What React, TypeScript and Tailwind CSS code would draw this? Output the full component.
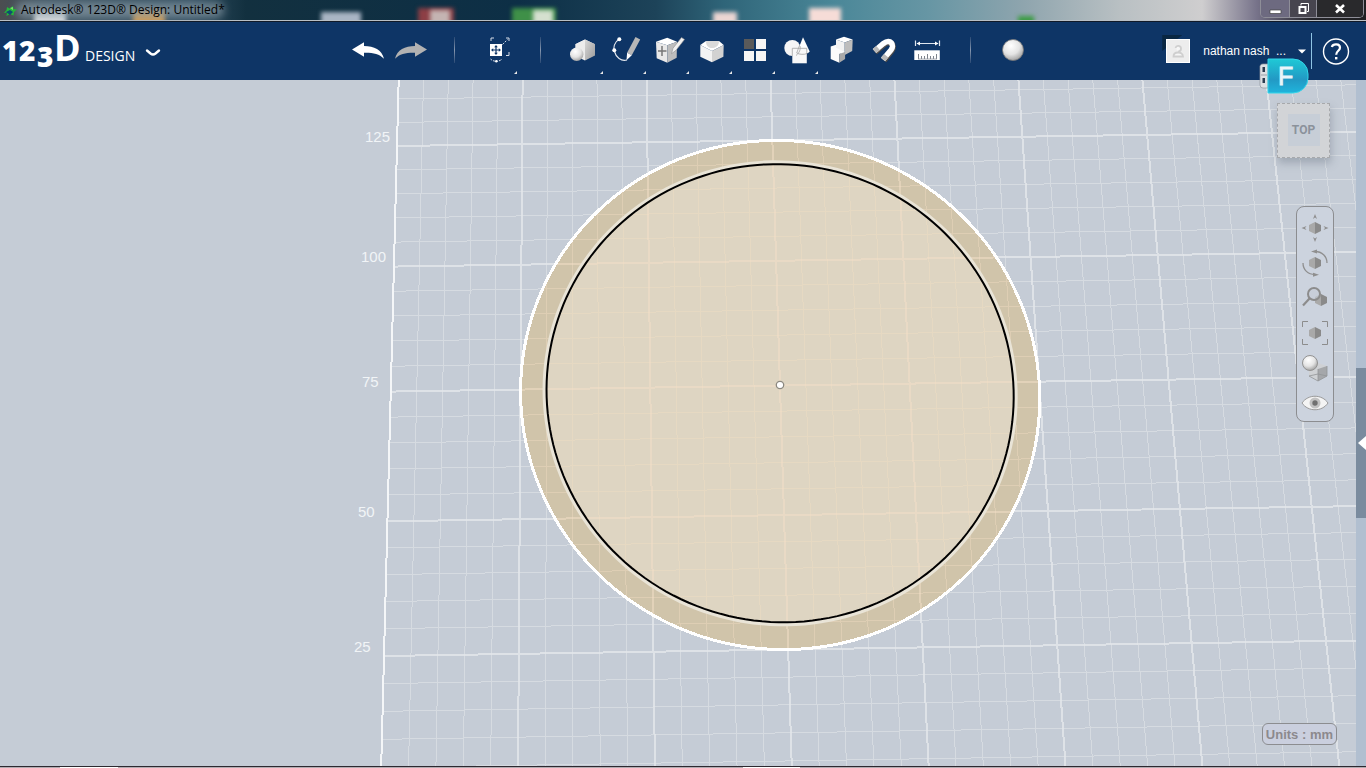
import type { ReactNode } from 'react';

type Point = [number, number];

// Screen positions of the sketch plane, measured in major grid cells (25 mm each)
const COLS = 7;
const ROWS = 4;
const CORNERS: Point[] = [[397, 146], [1272, 133], [1326, 641], [384, 656]];

function makeProjection([p0, p1, p2, p3]: Point[]) {
  const dx1 = p1[0] - p2[0];
  const dx2 = p3[0] - p2[0];
  const dx3 = p0[0] - p1[0] + p2[0] - p3[0];
  const dy1 = p1[1] - p2[1];
  const dy2 = p3[1] - p2[1];
  const dy3 = p0[1] - p1[1] + p2[1] - p3[1];
  const det = dx1 * dy2 - dx2 * dy1;
  const g = (dx3 * dy2 - dx2 * dy3) / det;
  const h = (dx1 * dy3 - dx3 * dy1) / det;
  const a = p1[0] - p0[0] + g * p1[0];
  const b = p3[0] - p0[0] + h * p3[0];
  const d = p1[1] - p0[1] + g * p1[1];
  const e = p3[1] - p0[1] + h * p3[1];

  return (col: number, row: number): Point => {
    const u = col / COLS;
    const v = row / ROWS;
    const w = g * u + h * v + 1;
    return [(a * u + b * v + p0[0]) / w, (d * u + e * v + p0[1]) / w];
  };
}

const project = makeProjection(CORNERS);

function segment(c1: number, r1: number, c2: number, r2: number) {
  const [x1, y1] = project(c1, r1);
  const [x2, y2] = project(c2, r2);
  return `M${x1.toFixed(2)} ${y1.toFixed(2)}L${x2.toFixed(2)} ${y2.toFixed(2)}`;
}

function gridPaths() {
  let minor = '';
  let major = '';
  for (let i = 1; i <= 42; i++) {
    const d = segment(i / 5, -1, i / 5, 5.5);
    if (i % 5 === 0) major += d;
    else minor += d;
  }
  for (let i = -5; i <= 26; i++) {
    const d = segment(0, i / 5, 8.4, i / 5);
    if (i % 5 === 0) major += d;
    else minor += d;
  }
  return { minor, major };
}

function circlePath(radius: number) {
  const pts: string[] = [];
  for (let i = 0; i < 180; i++) {
    const t = (i / 180) * Math.PI * 2;
    const [x, y] = project(3 + radius * Math.cos(t), 2 + radius * Math.sin(t));
    pts.push(`${x.toFixed(2)} ${y.toFixed(2)}`);
  }
  return `M${pts.join('L')}Z`;
}

const GRID = gridPaths();
const OUTER = circlePath(2);
const HALO = circlePath(1.815);
const INNER = circlePath(1.8);

const RULER = [
  { label: '125', x: 365, y: 142 },
  { label: '100', x: 361, y: 262 },
  { label: '75', x: 362, y: 387 },
  { label: '50', x: 358, y: 517 },
  { label: '25', x: 354, y: 652 },
];

function Workplane() {
  return (
    <svg className="absolute inset-0 h-full w-full" viewBox="0 80 1366 686" preserveAspectRatio="xMidYMid slice" aria-label="Sketch workplane">
      <defs>
        <clipPath id="disc">
          <path d={OUTER} />
        </clipPath>
      </defs>
      <g fill="none" shapeRendering="crispEdges">
        <path d={GRID.minor} stroke="#d6dbe1" />
        <path d={GRID.major} stroke="#e4e7eb" strokeWidth="2" strokeOpacity="0.8" />
        <path d={segment(0, -1, 0, 5.5)} stroke="#f4f6f8" strokeWidth="2" />
      </g>
      <path d={OUTER} fill="#d0c4aa" />
      <path d={INNER} fill="#ded5c2" />
      <g clipPath="url(#disc)" fill="none" shapeRendering="crispEdges">
        <path d={GRID.minor} stroke="#f3dfc4" strokeOpacity="0.4" />
        <path d={GRID.major} stroke="#f3e0c8" strokeWidth="2" strokeOpacity="0.5" />
      </g>
      <path d={HALO} fill="none" stroke="#e9e4d7" strokeWidth="4" />
      <path d={INNER} fill="none" stroke="#000" strokeWidth="2" />
      <path d={OUTER} fill="none" stroke="#fff" strokeWidth="3" shapeRendering="crispEdges" />
      <circle cx="780" cy="385" r="3.7" fill="#fff" stroke="#8b8880" strokeWidth="1.3" />
      <g fill="#f1f4f7" fontFamily='"Liberation Sans", Arial, sans-serif' fontSize="15">
        {RULER.map((r) => (
          <text key={r.label} x={r.x} y={r.y}>{r.label}</text>
        ))}
      </g>
    </svg>
  );
}

function ToolSvg({ children }: { children: ReactNode }) {
  return <svg width="33" height="32" viewBox="0 0 33 32" fill="none" aria-hidden="true">{children}</svg>;
}

const UndoIcon = (
  <ToolSvg>
    <path d="M0 15.5 12 8.3V12c10 0 18 4 20 12.7-5-5-11-6.2-20-6v4Z" fill="#fff" />
  </ToolSvg>
);

const RedoIcon = (
  <ToolSvg>
    <path d="M32 15.5 20 8.3V12C10 12 2 16 0 24.7c5-5 11-6.2 20-6v4Z" fill="#b2b2b2" />
  </ToolSvg>
);

const TransformIcon = (
  <ToolSvg>
    <rect x="9" y="10" width="12" height="12" fill="#fff" />
    <path d="M10 7V4h3M25 4h3v3M28 18v3.5h-3" stroke="#d5dce6" />
    <path d="m21.5 10.500 5-5" stroke="#d5dce6" strokeDasharray="2 1.2" />
    <path d="M15 12v8M11 16h8" stroke="#0e3566" strokeWidth="1.2" />
    <path d="m13.200 13.200 1.800-2.200 1.800 2.200ZM13.200 18.800 15 21l1.800-2.200ZM12.200 14.200 10 16l2.200 1.800ZM17.800 14.200 20 16l-2.200 1.800Z" fill="#0e3566" />
    <path d="M9.5 25c2.5 3 9 3 11.5 0" stroke="#d5dce6" strokeDasharray="2 1" />
    <circle cx="15.3" cy="27.3" r="1.2" fill="#fff" />
  </ToolSvg>
);

const PrimitivesIcon = (
  <ToolSvg>
    <path d="m18 5.5 10 4.7-10 5.3-9.7-5.3Z" fill="#fff" />
    <path d="M18 5.5v21L8.3 22V10.2Z" fill="#ececec" />
    <path d="M18 5.5v21l10-5V10.2Z" fill="url(#faceShade)" />
    <circle cx="9.7" cy="20.3" r="6.7" fill="url(#ball)" />
  </ToolSvg>
);

const SketchIcon = (
  <ToolSvg>
    <path d="M9.3 5.3C4 8 3 14 4.5 17.5 6 23.5 11 27.5 17 26" stroke="#e6eaf0" strokeWidth="1.1" />
    <circle cx="9.3" cy="5.3" r="2" fill="#fff" />
    <circle cx="4.3" cy="16.3" r="2" fill="#fff" />
    <path d="m25.5 3 4.7 2.5-8.4 15.7-4.7-2.4Z" fill="#b7b7b7" />
    <path d="m17.1 18.8 4.7 2.4-5.3 5Z" fill="#fff" />
  </ToolSvg>
);

const ConstructIcon = (
  <ToolSvg>
    <path d="m14.3 3.7 9.7 4-9.7 3.5L3 7.7Z" fill="#fff" />
    <path d="M3 7.7 14.3 11.2v17.5L3.700 24.3Z" fill="#e9e9e9" />
    <path d="M24 7.7 14.3 11.2v17.5l9.4-5Z" fill="#bdbdbd" />
    <path d="M9 12v10M5 17h8.500" stroke="#777" strokeWidth="1.5" />
    <path d="m28.5 3.5 3 2-8.500 10.8-4.5 3.4 1.5-5.5Z" fill="#f1f1f1" stroke="#8d8d8d" strokeWidth="0.6" />
  </ToolSvg>
);

const ModifyIcon = (
  <ToolSvg>
    <path d="M4.3 11 10 7h13l4.700 4L16 17Z" fill="#fff" />
    <path d="M4.3 11 16 17v11.300L4.300 22.700Z" fill="#f3f3f3" />
    <path d="M27.700 11 16 17v11.300l11.400-5.600Z" fill="#d2d2d2" />
    <path d="M10 7c0 5.500 3 7 6 7s7-1.500 7-7Z" fill="#dadada" />
  </ToolSvg>
);

const PatternIcon = (
  <ToolSvg>
    <path d="M5 5h10v10H5Z" fill="#5a5a5a" />
    <path d="M17 5h10v10H17ZM5 17h10v10H5ZM17 17h10v10H17Z" fill="#f6f6f6" />
  </ToolSvg>
);

const GroupingIcon = (
  <ToolSvg>
    <circle cx="10.3" cy="14" r="8" fill="#f6f6f6" />
    <path d="M21 3.3 27.7 17.5c-2 3-10 3.5-13 1.5Z" fill="#fff" />
    <path d="M10.3 14.3h14.5v15H10.3Z" fill="#f8f8f8" />
    <path d="M10.3 22v-7.700h14.500V20M18 12c.8 3-.5 7-4 9.500M17.700 11l-3 8c2.500 1.700 8 1.700 10.300.5" stroke="#a5a5a5" strokeWidth="0.8" />
  </ToolSvg>
);

const CombineIcon = (
  <ToolSvg>
    <path d="m11 5.5 8-2.7 8.7 2.7-8 3Z" fill="#fff" />
    <path d="m11 5.5 8.700 3V21l-8.700-3Z" fill="#f2f2f2" />
    <path d="m27.7 5.500-8 3V21l7.500-4Z" fill="#bdbdbd" />
    <path d="m5.7 12.500 5.300-1.700v3l8.700 4-5.400 2.200v8.700l-8.600-3.700Z" fill="#fbfbfb" />
    <path d="m14.3 20 5.800-2v7l-5.800 3.700Z" fill="#a9a9a9" />
  </ToolSvg>
);

const MagnetIcon = (
  <ToolSvg>
    <path d="m7 18 9-7.500c7-5.500 11.500 1.500 7.500 6.500L16 26.500" stroke="#514d4a" strokeWidth="6" />
    <path d="m6.500 17 9-7.500c7-5.500 11.500 1.500 7.500 6.500L15 25.500" stroke="#fff" strokeWidth="5.500" />
    <path d="m6.500 17 3.600-3M18.200 21.700 15 25.500" stroke="#b9b9b9" strokeWidth="5.500" />
  </ToolSvg>
);

const MeasureIcon = (
  <ToolSvg>
    <path d="M4.5 6.5V12M28.5 6.5V12M6 9.5h21" stroke="#dfe6ef" strokeWidth="1.2" />
    <path d="m5.500 9.500 3.500-2v4ZM27.500 9.500l-3.500-2v4Z" fill="#fff" />
    <path d="M3.300 16.300h25.500V26H3.300Z" fill="#fff" />
    <path d="M7.5 20v5M10.500 22v3M13.500 22v3M16.500 20v5M19.500 22v3M22.500 22v3M25.500 20v5" stroke="#7d838c" />
    <path d="M7 25h19" stroke="#8f959e" strokeWidth="0.8" />
  </ToolSvg>
);

const MaterialIcon = (
  <ToolSvg>
    <circle cx="16" cy="16" r="10.5" fill="url(#ball)" stroke="#777" strokeWidth="0.8" />
  </ToolSvg>
);

type Tool = { name: string; icon: ReactNode; menu?: boolean } | null;

// null draws a divider
const TOOLS: Tool[] = [
  { name: 'Undo', icon: UndoIcon },
  { name: 'Redo', icon: RedoIcon },
  null,
  { name: 'Transform', icon: TransformIcon, menu: true },
  null,
  { name: 'Primitives', icon: PrimitivesIcon, menu: true },
  { name: 'Sketch', icon: SketchIcon, menu: true },
  { name: 'Construct', icon: ConstructIcon, menu: true },
  { name: 'Modify', icon: ModifyIcon, menu: true },
  { name: 'Pattern', icon: PatternIcon, menu: true },
  { name: 'Grouping', icon: GroupingIcon, menu: true },
  { name: 'Combine', icon: CombineIcon },
  { name: 'Snap', icon: MagnetIcon },
  { name: 'Measure', icon: MeasureIcon },
  null,
  { name: 'Material', icon: MaterialIcon },
];

function SharedGradients() {
  return (
    <svg className="absolute h-0 w-0" aria-hidden="true">
      <defs>
        <radialGradient id="ball" cx="0.4" cy="0.3" r="0.75">
          <stop offset="0" stopColor="#fff" />
          <stop offset="0.55" stopColor="#e4e4e4" />
          <stop offset="1" stopColor="#9b9b9b" />
        </radialGradient>
        <linearGradient id="faceShade" x1="0" y1="0" x2="1" y2="1">
          <stop offset="0" stopColor="#d8d8d8" />
          <stop offset="1" stopColor="#9a9a9a" />
        </linearGradient>
      </defs>
    </svg>
  );
}

// Desktop icons showing through the glass frame
const BLOBS = [
  'left-[2.500%] top-2.5 w-8 bg-[#e3e5e6]',
  'left-[9.700%] top-2.5 w-8 bg-[#d39a4c]',
  'left-[23.500%] top-3 w-10 bg-[#a9b5c4]',
  'left-[30.600%] top-2 w-9 bg-[#8d3f45]',
  'left-[31.500%] top-2.5 w-5 bg-[#c4b4b2]',
  'left-[37.500%] top-2 w-11 bg-[#3f9048]',
  'left-[39%] top-2.5 w-5 bg-[#d5e0cf]',
  'left-[52.200%] top-3 w-6 bg-[#ecd6d3]',
  'left-[59.200%] top-2 w-8 bg-[#f6dcd7]',
  'left-[74.500%] top-4 w-4 bg-[#3d9c45]',
];

function TitleBar() {
  return (
    <div className="relative flex h-[22px] shrink-0 items-start justify-between overflow-hidden border-b border-[#111a28] bg-[linear-gradient(90deg,#4b4d50_0%,#3c5260_3%,#2f4c5e_14%,#12303f_18%,#0d2f46_38%,#1d4359_48%,#2f6579_53%,#4a8798_61%,#6796a4_68%,#8fa5ae_75%,#b9c0c3_82%,#cfcecf_88%,#77738a_92%,#25252a_96%,#1f1f22_100%)]">
      {BLOBS.map((b) => (
        <span key={b} className={`absolute h-4 blur-[2px] ${b}`} />
      ))}
      <span className="absolute inset-x-0 bottom-0 h-px bg-[#b9bfc5]" />
      <span className="absolute top-0.5 left-4 h-4 w-[208px] rounded-full bg-[#8c9ca8]/70 blur-[4px]" />
      <div className="relative flex h-5 items-center gap-1 pl-1">
        <svg width="13" height="13" viewBox="0 0 13 13" aria-hidden="true">
          <path d="M3 3 5.500 4.500 9 2l.5 3L13 5.500 10 8l-.5 3.500L6 10l-3.500 2L3 8.500 0 9l2.500-3Z" fill="#25b83a" />
          <path d="m2 8 4-2 3 2-3 3Z" fill="#0d4d70" />
          <path d="m6 4 3-1v3Z" fill="#7be06c" />
        </svg>
        <h1 className="font-['Open_Sans','Noto_Sans',sans-serif] text-[12px] leading-5 text-black">
          Autodesk® 123D® Design: Untitled*
        </h1>
      </div>
      <div className="relative mr-0.5 flex h-[18px] overflow-hidden rounded-b-[5px] border border-t-0 border-[#8e8e98] text-white">
        <button aria-label="Minimize" className="flex w-[29px] items-center justify-center border-r border-[#8e8e98] bg-[#6d6a80]">
          <svg width="13" height="14" viewBox="0 0 13 14"><path d="M1 8h11v3.500H1Z" fill="#fff" stroke="#444" strokeWidth="0.7" /></svg>
        </button>
        <button aria-label="Restore" className="flex w-[27px] items-center justify-center border-r border-[#8e8e98] bg-[#47454f]">
          <svg width="13" height="14" viewBox="0 0 13 14" fill="none" stroke="#fff"><path d="M4 3.500V1.500h7.500v8H10" /><path d="M2.500 5h6v6h-6Z" strokeWidth="2" /></svg>
        </button>
        <button aria-label="Close" className="flex w-[46px] items-center justify-center bg-[#29292c]">
          <svg width="12" height="12" viewBox="0 0 12 12" stroke="#fff" strokeWidth="2.6"><path d="m2 2 8 7.500M10 2 2 9.500" /></svg>
        </button>
      </div>
    </div>
  );
}

function Header() {
  return (
    <header className="grid h-[58px] shrink-0 grid-cols-[1fr_auto_1fr] items-stretch bg-[#0e3566]">
      <button aria-label="123D Design menu" className="flex w-[164px] items-center">
        <svg width="164" height="58" viewBox="0 22 164 58" fill="#fff" fontFamily='"Open Sans", "Noto Sans", sans-serif'>
          <g fontWeight="800" fontSize="28">
            <text x="2" y="61">1</text>
            <text x="19" y="61">2</text>
            <text x="37" y="67">3</text>
          </g>
          <text x="54" y="61" fontSize="36" fontWeight="700">D</text>
          <text x="85" y="61" fontSize="14">DESIGN</text>
          <path d="m147 50.500 3.500 3c2 1.500 3 1.500 5 0l3.500-3" fill="none" stroke="#fff" strokeWidth="2.4" strokeLinecap="round" />
        </svg>
      </button>
      <nav className="flex pl-[15px]" aria-label="Tools">
        {TOOLS.map((tool, i) =>
          tool ? (
            <button key={tool.name} aria-label={tool.name} className="relative flex w-[43px] items-center justify-center pb-0.5">
              {tool.icon}
              {tool.menu && (
                <svg className="absolute right-0.5 bottom-1.5" width="3" height="3" viewBox="0 0 3 3" aria-hidden="true">
                  <path d="M3 0v3H0Z" fill="#e8e8e8" />
                </svg>
              )}
            </button>
          ) : (
            <div key={i} className="flex w-[43px] items-center justify-center pb-0.5">
              <span className="h-[26px] w-px bg-linear-to-b from-[#2a4a75] via-[#8697ae] to-[#2a4a75]" />
            </div>
          ),
        )}
      </nav>
      <div className="flex items-center justify-end pr-4">
        <div className="relative mr-[13px] h-6 w-6">
          <span className="absolute -top-1 -left-1 h-4 w-5 bg-[#0a2742] [clip-path:polygon(0_0,100%_0,0_100%)]" />
          <svg className="relative" width="24" height="24" viewBox="0 0 24 24" aria-label="Profile picture">
            <path d="M0 0h24v24H0Z" fill="#fff" />
            <path d="M1 1h22v22H1Z" fill="#ededed" />
            <path d="M7.500 17.500c0-3 2.500-4 4.500-4s5 1 5 4ZM9.500 9a2.800 2.800 0 1 1 2.800 3.500" fill="#f6f6f6" stroke="#cfcfcf" strokeWidth="1.8" />
          </svg>
        </div>
        <button className="flex items-center gap-3 font-['Liberation_Sans',Arial,sans-serif] text-[12px] whitespace-pre text-white">
          nathan nash  ...
          <svg width="8" height="5" viewBox="0 0 8 5" aria-hidden="true"><path d="M0 .5h8l-4 4Z" fill="#fff" /></svg>
        </button>
        <span className="mr-2.5 ml-[5px] h-9 w-px bg-[#8fc4e4]" />
        <button aria-label="Help">
          <svg width="28" height="28" viewBox="0 0 28 28" fill="none" stroke="#fff">
            <circle cx="14" cy="14.5" r="12.500" strokeWidth="1.4" />
            <path d="M9.800 10C11 6.500 18 6.500 18 10.700c0 3-3.800 3.200-3.800 7" strokeWidth="2.2" />
            <path d="M13 20h2.400v2.400H13Z" fill="#fff" stroke="none" />
          </svg>
        </button>
      </div>
    </header>
  );
}

function DriveBadge() {
  return (
    <svg className="absolute -top-6 right-14 z-10" width="52" height="42" viewBox="0 0 52 42" aria-label="F">
      <defs>
        <linearGradient id="drive" x1="0" y1="0" x2="0" y2="1">
          <stop offset="0" stopColor="#1fc9d6" />
          <stop offset="0.6" stopColor="#2299c4" />
          <stop offset="1" stopColor="#20b4dc" />
        </linearGradient>
      </defs>
      <path d="M10 8v24H5a3 3 0 0 1-3-3V10a3 3 0 0 1 3-2Z" fill="#dde0e3" stroke="#8f979f" strokeWidth="0.7" />
      <path d="M4.500 11h2.500v5H4.500ZM4.500 22h2.500v5H4.500Z" fill="#2b3c50" />
      <path d="M3 19h6" stroke="#9aa1a9" />
      <path d="M10 3h25a15 15 0 0 1 15 15v4a15 15 0 0 1-15 15H10Z" fill="url(#drive)" stroke="#33d6ea" />
      <text x="20" y="29" fill="#e9f5fa" stroke="#e9f5fa" strokeWidth="0.8" fontFamily='"Liberation Sans", Arial, sans-serif' fontSize="25">F</text>
    </svg>
  );
}

function NavSvg({ children }: { children: ReactNode }) {
  return <svg width="28" height="28" viewBox="0 0 28 28" fill="none" aria-hidden="true">{children}</svg>;
}

function Cube({ x = 14, y = 14 }: { x?: number; y?: number }) {
  return (
    <g transform={`translate(${x} ${y})`}>
      <path d="M0-6v12l-6-3v-6Z" fill="#a9a9a9" />
      <path d="M0-6v12l6-3v-6Z" fill="#8a8a8a" />
    </g>
  );
}

const NAV_ITEMS = [
  {
    name: 'Pan',
    icon: (
      <NavSvg>
        <Cube />
        <path d="m14 0 2 5-2-1.500L12 5ZM14 28l2-5-2 1.500-2-1.500ZM.5 14l5-2L4 14l1.500 2ZM27.500 14l-5-2 1.500 2-1.500 2Z" fill="#8f8f8f" />
      </NavSvg>
    ),
  },
  {
    name: 'Orbit',
    icon: (
      <NavSvg>
        <Cube />
        <path d="M14 2.500c7 0 12 5 12 11.500M14 25.500C7 25.500 2 21 2 14" stroke="#8f8f8f" strokeWidth="1.3" />
        <path d="m10 2.500 6-2v4ZM18 25.700l-6-2v4Z" fill="#8f8f8f" />
      </NavSvg>
    ),
  },
  {
    name: 'Zoom',
    icon: (
      <NavSvg>
        <Cube x={20} y={16} />
        <circle cx="13" cy="10" r="6" fill="#c5ccd6" fillOpacity="0.6" stroke="#8c8c8c" strokeWidth="2" />
        <path d="M8.500 14.500 2 21.500" stroke="#8c8c8c" strokeWidth="2.2" />
      </NavSvg>
    ),
  },
  {
    name: 'Fit',
    icon: (
      <NavSvg>
        <Cube />
        <path d="M1.500 8V2.500H7M21 2.500h5.500V8M26.500 20v5.500H21M7 25.500H1.500V20" stroke="#8c8c8c" />
      </NavSvg>
    ),
  },
  {
    name: 'Display mode',
    icon: (
      <NavSvg>
        <path d="m8 13 9-4 9 3v10l-9 5-9-5Z" fill="#cfd1d4" />
        <path d="m17 15 9-3v10l-9 5Z" fill="#a5a7aa" />
        <path d="m8 22 9-2 9 2-9 5ZM17 15v12M26 12v10" stroke="#929497" strokeWidth="0.8" />
        <circle cx="9" cy="9" r="7.500" fill="url(#ball)" stroke="#929292" />
      </NavSvg>
    ),
  },
  {
    name: 'Visibility',
    icon: (
      <NavSvg>
        <path d="M1 14c6-9 20-9 26 0-6 9-20 9-26 0Z" fill="#f4f4f4" stroke="#9a9a9a" />
        <circle cx="14" cy="14" r="5.500" fill="#c2c2c2" />
        <circle cx="14" cy="14" r="2.700" fill="#707070" />
      </NavSvg>
    ),
  },
];

function Viewport() {
  return (
    <main className="relative flex min-h-0 flex-1 justify-end bg-[#c5ccd6] font-['Liberation_Sans',Arial,sans-serif]">
      <Workplane />
      <DriveBadge />
      <div className="relative mr-[19px] flex flex-col items-end justify-between pt-[23px] pb-[21px]">
        <div className="flex flex-col items-end gap-12 pr-[3px]">
          <button className="mr-1 flex h-[55px] w-[53px] items-start justify-center border border-dashed border-[#a7a9ac] bg-[#d2d4d7] pt-2.5 shadow-[1px_5px_8px_rgba(90,100,115,0.35)]">
            <span className="flex h-8 w-8 items-center justify-center bg-[#c7ced7] font-['Roboto',sans-serif] text-[12px] leading-none font-bold text-[#8b929b]">TOP</span>
          </button>
          <div className="flex w-[38px] flex-col items-center gap-[7px] rounded-lg border border-[#8c8d90] bg-[#ccd3de] pt-[7px] pb-1">
            {NAV_ITEMS.map((item) => (
              <button key={item.name} aria-label={item.name}>{item.icon}</button>
            ))}
          </div>
        </div>
        <button className="h-[22px] rounded-md border border-[#8c8d90] bg-[#cacfde] px-[3px] text-[13px] leading-none font-bold text-[#8c898d]">Units : mm</button>
      </div>
      <div className="relative flex w-2.5 flex-col bg-[#b1bfd0]">
        <span className="grow-[288]" />
        <button aria-label="Open side panel" className="flex h-[150px] items-center justify-end bg-[#7a8b9e]">
          <svg width="8" height="14" viewBox="0 0 8 14" aria-hidden="true"><path d="M8 0v14L0 7Z" fill="#fff" /></svg>
        </button>
        <span className="grow-[248]" />
      </div>
    </main>
  );
}

export default function App() {
  return (
    <div className="flex h-screen flex-col overflow-hidden">
      <SharedGradients />
      <TitleBar />
      <Header />
      <Viewport />
      <div className="flex h-0.5 shrink-0 border-t border-[#2d2930] bg-[#b3acb1]">
        <span className="ml-[60px] w-[58px] bg-white" />
        <span className="ml-[625px] w-[57px] bg-white" />
      </div>
    </div>
  );
}
